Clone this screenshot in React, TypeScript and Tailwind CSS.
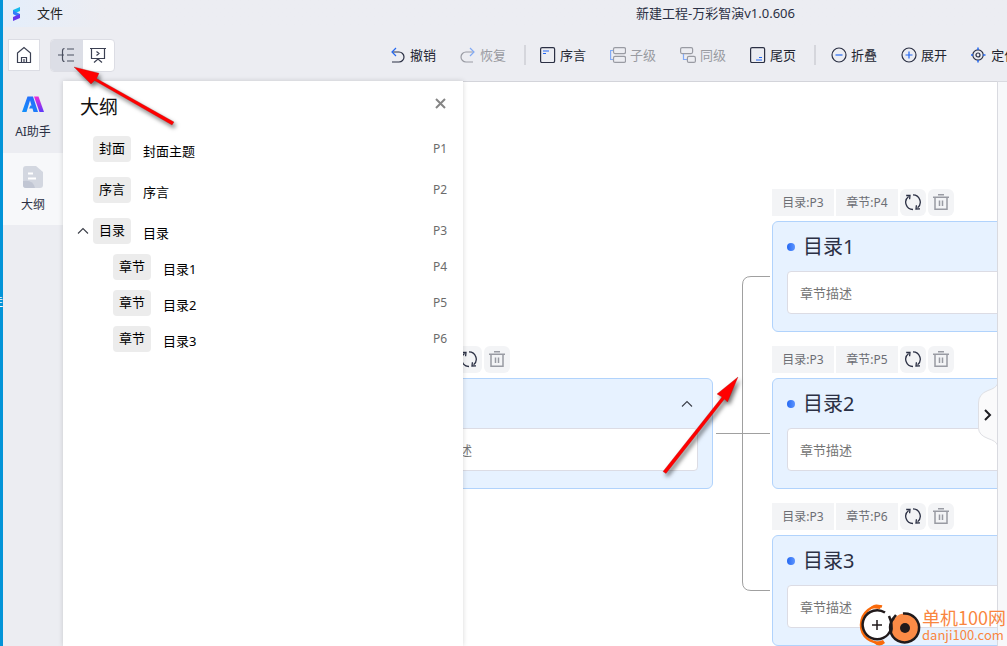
import React from 'react';

interface OutlineItem {
  tag: string;
  title: string;
  page: string;
}

interface TopicNodeProps {
  tags: string[];
  title: string;
  className: string;
  collapsible?: boolean;
}

interface ToolButtonProps {
  label: string;
  disabled?: boolean;
  children: React.ReactNode;
}

const SECTIONS: OutlineItem[] = [
  { tag: '封面', title: '封面主题', page: 'P1' },
  { tag: '序言', title: '序言', page: 'P2' },
  { tag: '目录', title: '目录', page: 'P3' },
];

const CHAPTERS: OutlineItem[] = [
  { tag: '章节', title: '目录1', page: 'P4' },
  { tag: '章节', title: '目录2', page: 'P5' },
  { tag: '章节', title: '目录3', page: 'P6' },
];

const ToolButton: React.FC<ToolButtonProps> = ({ label, disabled, children }) => (
  <button
    disabled={disabled}
    className={`flex shrink-0 items-center gap-1 text-[13px] leading-5 whitespace-nowrap ${
      disabled ? 'text-[#999ba1]' : 'text-[#222430]'
    }`}
  >
    <svg width="16" height="16" viewBox="0 0 16 16" fill="none" stroke={disabled ? '#999ba3' : '#2b3044'} strokeWidth="1.2">
      {children}
    </svg>
    {label}
  </button>
);

const Separator = () => <div className="mr-[14px] ml-[18px] h-5 w-[2px] shrink-0 bg-[#d5d6dc]" />;

const ChevronUp = () => (
  <svg width="12" height="8" viewBox="0 0 12 8" fill="none" stroke="#3c3f48" strokeWidth="1.1">
    <path d="M1 6.5L6 1.5L11 6.5" />
  </svg>
);

const RefreshIcon = () => (
  <svg width="18" height="18" viewBox="0 0 18 18" fill="none" stroke="#2b3044" strokeWidth="1.3">
    <path d="M9 .9a7.300 7.300 0 0 1 4.600 12.900M9 15.500A7.300 7.300 0 0 1 4.600 2.400" />
    <path d="M2.200 1.500L6 1.400L5.600 5.200M16 14.900L12 15L12.400 11.200" />
  </svg>
);

const TrashIcon = () => (
  <svg width="18" height="18" viewBox="0 0 18 18" fill="none" stroke="#999ba3" strokeWidth="1.5">
    <path d="M6 .8H12M1 3.200H17M3 3.200V15.200H15V3.200M7.500 6.500V12M10.500 6.500V12" />
  </svg>
);

const OutlineRow: React.FC<{ item: OutlineItem }> = ({ item }) => (
  <>
    <span className="flex h-[26px] w-[38px] shrink-0 items-center justify-center rounded bg-[#ececec] text-[13px] text-black">
      {item.tag}
    </span>
    <span className="ml-3 flex-1 pt-1 text-[13px] leading-5 text-black">{item.title}</span>
    <span className="text-xs text-[#6b6b6b]">{item.page}</span>
  </>
);

const TopicNode: React.FC<TopicNodeProps> = ({ tags, title, className, collapsible }) => (
  <section className={`absolute w-[321px] ${className}`}>
    <div className="mb-[5px] flex h-[27px] gap-[2px] text-xs text-[#6c6e74]">
      {tags.map((tag) => (
        <span key={tag} className="flex w-[62px] items-center justify-center bg-[#f3f4f6]">
          {tag}
        </span>
      ))}
      <button aria-label="刷新" className="flex w-[26px] items-center justify-center rounded-md bg-[#f3f4f6]">
        <RefreshIcon />
      </button>
      <button aria-label="删除" className="flex w-[26px] items-center justify-center rounded-md bg-[#f3f4f6]">
        <TrashIcon />
      </button>
    </div>
    <div className="h-[111px] rounded-md border border-[#b1d3fc] bg-[#e7f2ff] px-[14px]">
      <div className="flex h-[49px] items-center">
        <span className="h-2 w-2 rounded-full bg-linear-to-r from-[#2468f2] to-[#5c94ff]" />
        <h3 className="ml-2 flex-1 text-xl text-[#2b3044]">{title}</h3>
        {collapsible && (
          <button aria-label="收起" className="mr-[5px]">
            <ChevronUp />
          </button>
        )}
      </div>
      <input
        aria-label={`${title}描述`}
        placeholder="章节描述"
        className="h-[43px] w-full rounded border border-[#dcdce4] bg-white px-3 text-[13px] placeholder:text-[#757575]"
      />
    </div>
  </section>
);

const OutlinePanel = () => (
  <aside className="z-10 w-[400px] shrink-0 bg-white shadow-[0_0_5px_rgba(0,0,0,0.16)]">
    <div className="flex h-[55px] items-center pr-4 pl-[17px]">
      <h2 className="mb-1 flex-1 text-[19px] leading-7 text-[#111]">大纲</h2>
      <button aria-label="关闭" className="mb-[11px] p-px">
        <svg width="11" height="11" viewBox="0 0 11 11" stroke="#858585" strokeWidth="2">
          <path d="M1 1L10 10M10 1L1 10" />
        </svg>
      </button>
    </div>
    <ul className="flex flex-col gap-[15px] pr-4">
      {SECTIONS.map((item) => (
        <li key={item.tag} className="flex items-center">
          <span className="flex w-[30px] justify-center pl-[9px]">{item.tag === '目录' && <ChevronUp />}</span>
          <OutlineRow item={item} />
        </li>
      ))}
    </ul>
    <ul className="mt-[10px] flex flex-col gap-[10px] pr-4 pl-[50px]">
      {CHAPTERS.map((item) => (
        <li key={item.page} className="flex items-center">
          <OutlineRow item={item} />
        </li>
      ))}
    </ul>
  </aside>
);

const Canvas = () => (
  <main className="relative flex-1 overflow-hidden border-t border-[#d3d4da] bg-white">
    {/* Conectores entre el tema y sus capítulos */}
    <svg className="absolute top-0 left-0" width="320" height="520" fill="none" stroke="#a0a0a0">
      <path d="M253 351.5H307M307 194.5H288Q279.500 194.500 279.500 203V500Q279.500 508.500 288 508.500H307" />
    </svg>
    <TopicNode className="top-[264px] left-[-71px]" tags={['目录:P3']} title="目录" collapsible />
    <TopicNode className="top-[107px] left-[309px]" tags={['目录:P3', '章节:P4']} title="目录1" />
    <TopicNode className="top-[264px] left-[309px]" tags={['目录:P3', '章节:P5']} title="目录2" />
    <TopicNode className="top-[421px] left-[309px]" tags={['目录:P3', '章节:P6']} title="目录3" />
    <button aria-label="展开侧栏" className="absolute top-[300px] right-0">
      <svg width="19" height="64" viewBox="0 0 19 64" fill="none">
        <path d="M19.500 2Q18 6 10 8.500Q.5 12 .5 21V46Q.5 53 10 56.500Q18 59 19.500 63" fill="#fafafb" stroke="#dedfe4" />
        <path d="M7 28L12 33L7 38" stroke="#1d1d22" strokeWidth="2" />
      </svg>
    </button>
  </main>
);

const RedArrows = () => (
  <svg className="pointer-events-none absolute inset-0 z-20 h-full w-full drop-shadow-[2px_3px_2px_rgba(0,0,0,0.55)]">
    <g fill="#ff0000" stroke="#a01010" strokeWidth="0.3">
      <path d="M74 67L99 73.300L96.500 78.500L174 122L172 125L94.500 80.500L91 84Z" />
      <path d="M738 377L717 394L722 397L663 471.500L666 473.500L724.500 399L727.500 402Z" />
    </g>
  </svg>
);

const Watermark = () => (
  <div className="pointer-events-none absolute right-px bottom-0 z-20 flex items-center text-[#f9863f]">
    <svg width="64" height="43" viewBox="0 0 64 43" fill="none">
      <path d="M24 3.500C15 1 3 9 3 22C3 34 13 41 25 39.500" stroke="#f96a0b" strokeWidth="2.500" />
      <path d="M12 5Q17-1 23 3L22 6ZM16 40Q21 45 27 40L25 37Z" fill="#f96a0b" />
      <circle cx="19" cy="22" r="14.500" fill="#fff" />
      <path d="M27 9.500A14.500 14.500 0 1 0 33 26" stroke="#211a1b" strokeWidth="2.500" />
      <path d="M19 17V27M14 22H24" stroke="#211a1b" strokeWidth="1.500" />
      <circle cx="47" cy="25" r="14.500" fill="#fc8b46" />
      <path d="M45 10.500A14.500 14.500 0 1 1 36 15" stroke="#211a1b" strokeWidth="2.500" />
      <path d="M31 13Q35 22 33 29M34 17L38 12" stroke="#211a1b" strokeWidth="2.500" />
      <circle cx="47" cy="25" r="5" fill="#211a1b" />
    </svg>
    <div className="whitespace-nowrap font-['Noto_Sans_CJK_SC',sans-serif]">
      <p className="text-lg leading-5">单机100网</p>
      <p className="text-[13px] leading-4">danji100.com</p>
    </div>
  </div>
);

export default function App() {
  return (
    <div className="relative flex h-screen overflow-hidden bg-[#ecedf2] font-['Noto_Sans','Noto_Sans_CJK_SC',sans-serif] text-[#2b3044]">
      {/* Franja del escritorio */}
      <div className="flex w-[3px] shrink-0 justify-end overflow-hidden bg-[#0394d8] pt-[294px] text-xs text-white">
        <span>佳</span>
      </div>

      <div className="flex min-w-0 flex-1 flex-col">
        <header className="flex h-[27px] shrink-0 items-center bg-linear-to-r from-[#e4eefb] to-[#ecedf2] to-10% pl-[9px] text-[13px]">
          <svg width="10" height="16" viewBox="0 0 10 16">
            <path d="M1 4L8 1V5L1 8Z" fill="#18b9ed" />
            <path d="M1 4.500L8 8V12L1 8Z" fill="#357dfa" />
            <path d="M1 11L8 8V12L1 15Z" fill="#6537ed" />
          </svg>
          <button className="ml-[15px] text-[#222]">文件</button>
          <h1 className="flex-1 pl-[421px] text-center whitespace-nowrap">新建工程-万彩智演v1.0.606</h1>
          <span className="w-[60px] shrink-0" />
        </header>

        <nav className="flex h-[54px] shrink-0 items-center overflow-hidden pt-[2px] pl-[5px]">
          <button aria-label="主页" className="mr-[10px] flex h-8 w-8 shrink-0 items-center justify-center border border-[#dcdde4] bg-white">
            <svg width="16" height="18" viewBox="0 0 16 18" fill="none" stroke="#3b4052" strokeWidth="1.2">
              <path d="M1.500 7L8 1.500L14.500 7V16.500H1.500ZM5.500 16.500V11.500H10.500V16.500M8 13V16" />
            </svg>
          </button>
          <div className="flex h-[33px] w-[65px] shrink-0 overflow-hidden rounded border border-[#dcdde4] bg-white">
            <button aria-label="大纲视图" className="flex flex-1 items-center justify-center bg-[#dcdee6]">
              <svg width="17" height="16" viewBox="0 0 17 16" fill="none" stroke="#4b5060" strokeWidth="1.2">
                <path d="M6.500 1.500Q4.500 1.500 4.500 4V12Q4.500 14.500 6.500 14.500M0 8H6M9 2H16M9 8H16M9 14H16" />
              </svg>
            </button>
            <button aria-label="放映" className="flex flex-1 items-center justify-center">
              <svg width="18" height="18" viewBox="0 0 18 18" fill="none" stroke="#3b4052" strokeWidth="1.2">
                <path d="M1 2.500H17M2.500 2.500V12.500H15.500V2.500M7.500 5.500L10 7.500L7.500 9.500M5 16.500L9 13L13 16.500" />
              </svg>
            </button>
          </div>

          <div className="ml-[275px] flex items-center gap-6">
            <ToolButton label="撤销">
              <path d="M2 5H9A4.500 4.500 0 0 1 9 15H2" />
              <path d="M6 1L2 5L6 9" stroke="#2468f2" />
            </ToolButton>
            <ToolButton label="恢复" disabled>
              <path d="M14 5H6A4.500 4.500 0 0 0 6 15H13" />
              <path d="M10 1L14 5L10 9" stroke="#82aaf5" />
            </ToolButton>
          </div>
          <Separator />
          <div className="flex items-center gap-6">
            <ToolButton label="序言">
              <rect x=".6" y=".6" width="14" height="15" rx="1.500" />
              <path d="M3 4H9M3 6.500H6" stroke="#2468f2" />
            </ToolButton>
            <ToolButton label="子级" disabled>
              <rect x="3.500" y=".6" width="12" height="6" rx="1.500" />
              <rect x="3.500" y="9.400" width="12" height="6" rx="1.500" />
              <path d="M3 3.500H.6V12.500H3" stroke="#82aaf5" />
            </ToolButton>
            <ToolButton label="同级" disabled>
              <rect x=".6" y=".6" width="12" height="6" rx="1.500" />
              <rect x="7.400" y="9.400" width="8" height="6" rx="1.500" />
              <path d="M3.500 7V12.500H7" stroke="#82aaf5" />
            </ToolButton>
            <ToolButton label="尾页">
              <rect x=".6" y=".6" width="14" height="15" rx="1.500" />
              <path d="M9 10.500H12M6 13H12" stroke="#2468f2" />
            </ToolButton>
          </div>
          <Separator />
          <div className="flex items-center gap-6 pl-px">
            <ToolButton label="折叠">
              <circle cx="8" cy="8" r="7" />
              <path d="M4.500 8H11.500" stroke="#2468f2" />
            </ToolButton>
            <ToolButton label="展开">
              <circle cx="8" cy="8" r="7" />
              <path d="M4.500 8H11.500M8 4.500V11.500" stroke="#2468f2" />
            </ToolButton>
            <ToolButton label="定位">
              <circle cx="7" cy="8" r="5.200" />
              <circle cx="7" cy="8" r="2" />
              <path d="M7 .5V3M7 13V15.500M0 8H2M12 8H14.500" stroke="#2468f2" strokeWidth="1.500" />
            </ToolButton>
          </div>
        </nav>

        <div className="flex min-h-0 flex-1">
          <nav className="flex w-[60px] shrink-0 flex-col text-xs">
            <button className="flex h-[72px] flex-col items-center justify-center gap-[9px]">
              <svg width="22" height="20" viewBox="0 0 22 20">
                <defs>
                  <linearGradient id="ai-blue" x1="0" y1="1" x2="1" y2="0">
                    <stop offset="0" stopColor="#1192fb" />
                    <stop offset="1" stopColor="#2c62fa" />
                  </linearGradient>
                  <linearGradient id="ai-pink" x1="0" y1="0" x2="0" y2="1">
                    <stop offset="0" stopColor="#ed2bd8" />
                    <stop offset="1" stopColor="#5c39fa" />
                  </linearGradient>
                </defs>
                <path d="M0 17L5.500 1.500H11L16 17H11.500L10.500 13.500H7L8.500 10.500H9.500L8 5.500L4.500 17Z" fill="url(#ai-blue)" />
                <path d="M12 1.500H16.500L22 17H17.500Z" fill="url(#ai-pink)" />
              </svg>
              AI助手
            </button>
            <button className="flex h-[72px] flex-col items-center justify-center gap-[9px] bg-[#f7f8fa]">
              <svg width="20" height="22" viewBox="0 0 20 22">
                <path d="M3 0H13L20 6V19Q20 22 17 22H3Q0 22 0 19V3Q0 0 3 0Z" fill="#d3d7e0" />
                <path d="M0 15Q10 13 12 22H3Q0 22 0 19Z" fill="#c1c6d3" />
                <path d="M5 7.500H10M5 12.500H13" stroke="#fff" strokeWidth="2" />
              </svg>
              大纲
            </button>
          </nav>
          <OutlinePanel />
          <Canvas />
          <div className="w-[10px] shrink-0 border-t border-l border-[#d9dae0] bg-[#f7f8fa]" />
        </div>
      </div>

      <RedArrows />
      <Watermark />
    </div>
  );
}
